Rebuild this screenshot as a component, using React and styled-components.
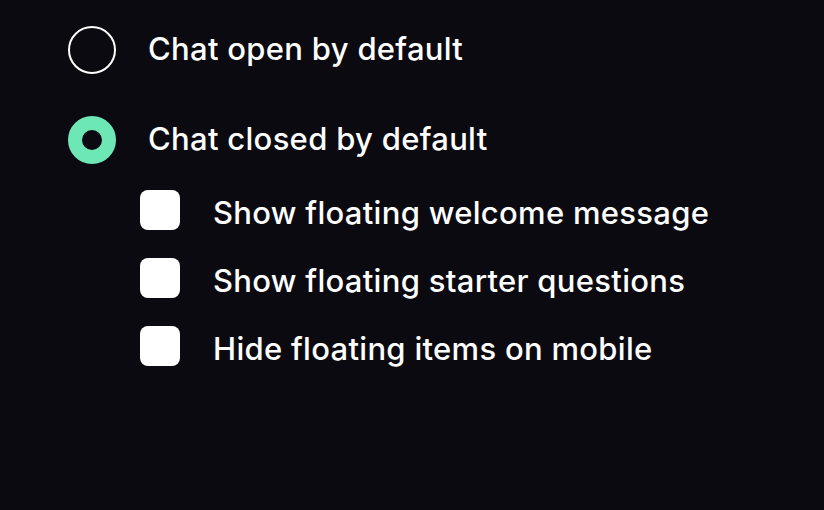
import React, { useState } from 'react';
import styled, { createGlobalStyle } from 'styled-components';

const GlobalStyle = createGlobalStyle`
    html, body {
        margin: 0;
        padding: 0;
        background: #0b0a10;
    }
    body {
        font-family: Inter, "Noto Sans", sans-serif;
        color: #ffffff;
    }
`;

const Page = styled.div`
    min-height: 510px;
    box-sizing: border-box;
    padding: 26px 0 0 68px;
    display: flex;
    flex-direction: column;
`;

const RadioGroup = styled.div`
    display: flex;
    flex-direction: column;
    gap: 42px;
`;

const Row = styled.label`
    display: flex;
    align-items: center;
    gap: ${(p) => p.$gap}px;
    font-size: 31px;
    font-weight: 500;
    letter-spacing: 0.3px;
    line-height: 1;
    cursor: pointer;
`;

// nudges the text against its control, positive moves it down
const Label = styled.span`
    position: relative;
    top: ${(p) => p.$shift || 0}px;
`;

const RadioDot = styled.span`
    width: 48px;
    height: 48px;
    box-sizing: border-box;
    border-radius: 50%;
    flex: none;
    border: ${(p) => (p.$checked ? '14px solid #6ee7b7' : '2px solid #ffffff')};
    background: #0b0a10;
`;

const CheckList = styled.div`
    display: flex;
    flex-direction: column;
    gap: 28px;
    margin: 26px 0 0 72px;
`;

const Box = styled.span`
    width: 40px;
    height: 40px;
    border-radius: 8px;
    background: #ffffff;
    flex: none;
`;

const options = ['Chat open by default', 'Chat closed by default'];
const floating = [
    'Show floating welcome message',
    'Show floating starter questions',
    'Hide floating items on mobile',
];

export default function App() {
    const [mode, setMode] = useState(1);
    return (
        <>
            <GlobalStyle />
            <Page>
                <RadioGroup>
                    {options.map((label, i) => (
                        <Row key={label} $gap={32} onClick={() => setMode(i)}>
                            <RadioDot $checked={mode === i} />
                            <Label $shift={-2}>{label}</Label>
                        </Row>
                    ))}
                </RadioGroup>
                <CheckList>
                    {floating.map((label) => (
                        <Row key={label} $gap={33}>
                            <Box />
                            <Label $shift={2}>{label}</Label>
                        </Row>
                    ))}
                </CheckList>
            </Page>
        </>
    );
}
